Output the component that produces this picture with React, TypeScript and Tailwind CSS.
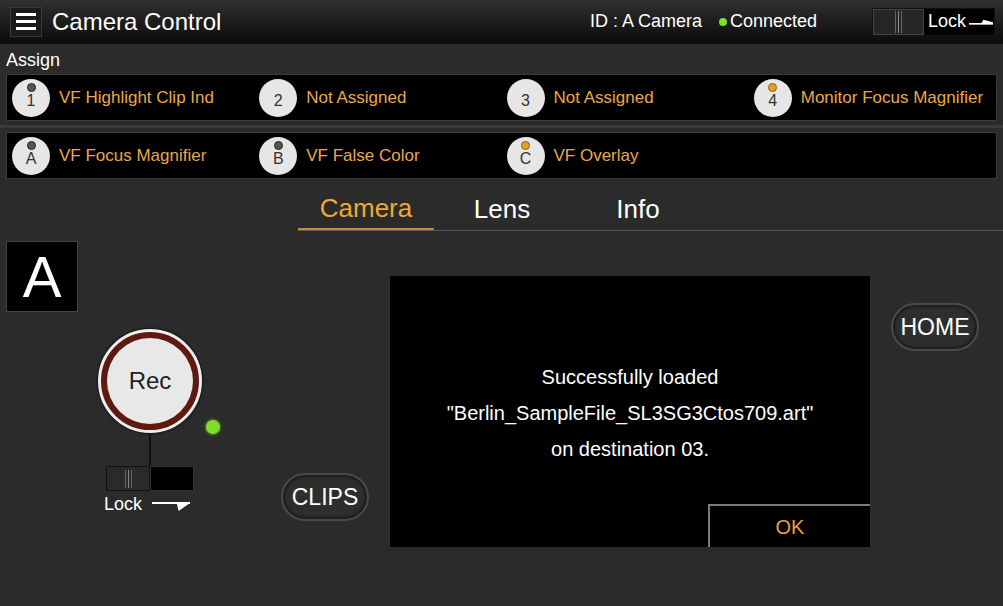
import React from 'react';

const FONT = { fontFamily: '"Liberation Sans", Arial, sans-serif' };

type Assign = { key: string; label: string; dot: 'gray' | 'orange' | 'none' };

const ROW1: Assign[] = [
  { key: '1', label: 'VF Highlight Clip Ind', dot: 'gray' },
  { key: '2', label: 'Not Assigned', dot: 'none' },
  { key: '3', label: 'Not Assigned', dot: 'none' },
  { key: '4', label: 'Monitor Focus Magnifier', dot: 'orange' },
];

const ROW2: Assign[] = [
  { key: 'A', label: 'VF Focus Magnifier', dot: 'gray' },
  { key: 'B', label: 'VF False Color', dot: 'gray' },
  { key: 'C', label: 'VF Overlay', dot: 'orange' },
];

// line with a small half arrow head, as drawn next to the "Lock" labels
function LockArrow({ className, down }: { className?: string; down?: boolean }) {
  return (
    <svg viewBox="0 0 40 12" preserveAspectRatio="none" className={className}>
      <path d={down ? 'M0 3 H40' : 'M0 7 H40'} stroke="#fff" strokeWidth="2" />
      <path d={down ? 'M26 3 L40 3 L28 11 Z' : 'M20 7 L40 7 L40 5 L24 2 Z'} fill="#fff" />
    </svg>
  );
}

function AssignButton({ item }: { item: Assign }) {
  return (
    <div className="flex items-center gap-[9px] pl-[5px]">
      <div className="flex h-[38px] w-[38px] shrink-0 flex-col items-center rounded-full bg-[#e6e6e6] shadow-[0_0_2px_#000]">
        <span
          className={
            item.dot === 'gray'
              ? 'mt-[4px] h-[9px] w-[9px] rounded-full border border-[#222] bg-[#555]'
              : item.dot === 'orange'
                ? 'mt-[4px] h-[9px] w-[9px] rounded-full border border-[#8a5a10] bg-[#e8a020]'
                : 'mt-[4px] h-[9px] w-[9px]'
          }
        />
        <span className="mt-[-1px] text-[16px] leading-[20px] text-[#333]">{item.key}</span>
      </div>
      <span className="text-[17px] text-[#e8a848]">{item.label}</span>
    </div>
  );
}

function AssignRow({ items }: { items: Assign[] }) {
  return (
    <div className="mx-[6px] grid h-[47px] grid-cols-4 items-center border border-[#3c3c3c] bg-black">
      {items.map((it) => (
        <AssignButton key={it.key} item={it} />
      ))}
    </div>
  );
}

function PillButton({ label }: { label: string }) {
  return (
    <div className="flex h-[48px] w-[88px] items-center justify-center rounded-full border-2 border-[#4a4a4a] bg-[#2e2e2e] text-[23px] text-white shadow-[inset_0_0_4px_#000]">
      {label}
    </div>
  );
}

export default function App() {
  return (
    <div style={FONT} className="h-[606px] w-[1003px] overflow-hidden bg-[#2b2b2b] text-white">
      {/* header */}
      <div className="flex h-[44px] items-center border-b border-[#111] bg-gradient-to-b from-[#303030] to-[#0c0c0c] pl-[10px] pr-[8px]">
        <div className="flex h-[30px] w-[32px] flex-col items-center justify-center gap-[4px] border border-[#3a3a3a] bg-[#1a1a1a]">
          <span className="h-[3px] w-[20px] bg-white" />
          <span className="h-[3px] w-[20px] bg-white" />
          <span className="h-[3px] w-[20px] bg-white" />
        </div>
        <span className="ml-[10px] text-[24px]">Camera Control</span>
        <span className="ml-auto text-[18px]">ID : A Camera</span>
        <span className="ml-[17px] h-[8px] w-[8px] rounded-full bg-[#7ee02a]" />
        <span className="ml-[3px] text-[18px]">Connected</span>
        <div className="ml-[55px] flex h-[28px] w-[123px] border border-[#111]">
          <div className="flex w-[51px] items-center justify-center gap-[2px] border border-[#444] bg-[#262626]">
            <span className="h-[22px] w-px bg-[#666]" />
            <span className="h-[22px] w-px bg-[#888]" />
            <span className="h-[22px] w-px bg-[#666]" />
          </div>
          <div className="flex flex-1 items-center gap-[3px] bg-black pl-[4px]">
            <span className="text-[18px]">Lock</span>
            <LockArrow className="mt-[2px] h-[10px] w-[24px]" />
          </div>
        </div>
      </div>

      {/* assign */}
      <div className="pl-[6px] pt-[6px] text-[18px] leading-[21px]">Assign</div>
      <div className="mt-[3px]">
        <AssignRow items={ROW1} />
      </div>
      <div className="mt-[4px] h-[3px] bg-[#3a3a3a]" />
      <div className="mt-[4px]">
        <AssignRow items={ROW2} />
      </div>

      {/* tabs */}
      <div className="ml-[298px] mt-[9px] flex h-[43px] border-b border-[#555]">
        <div className="flex w-[136px] items-center justify-center border-b-2 border-[#c98a3a] text-[26px] text-[#f0a832]">
          Camera
        </div>
        <div className="flex w-[136px] items-center justify-center text-[26px]">Lens</div>
        <div className="flex w-[136px] items-center justify-center text-[26px]">Info</div>
      </div>

      {/* main */}
      <div className="mt-[10px] flex items-start">
        <div className="w-[281px] shrink-0 pl-[6px]">
          <div className="flex h-[71px] w-[72px] items-center justify-center border border-[#444] bg-black text-[58px] leading-none">
            A
          </div>
          <div className="ml-[92px] mt-[17px] flex w-[130px] flex-col items-start">
            <div className="flex items-end">
              <div className="flex h-[104px] w-[104px] items-center justify-center rounded-full border-[3px] border-[#eee] bg-[#5e1a10] p-[6px] shadow-[0_0_3px_#000]">
                <div className="flex h-full w-full items-center justify-center rounded-full bg-[#e8e8e8] text-[24px] text-[#222]">
                  Rec
                </div>
              </div>
              <span className="mb-[-1px] ml-[4px] h-[14px] w-[14px] rounded-full bg-[#7edc2a] shadow-[0_0_3px_#7edc2a]" />
            </div>
            <div className="ml-[51px] h-[33px] w-[2px] bg-[#111]" />
            <div className="ml-[8px] flex h-[25px] w-[88px]">
              <div className="flex w-[44px] items-center justify-center gap-[2px] border border-[#111] bg-[#2a2a2a]">
                <span className="h-[18px] w-px bg-[#666]" />
                <span className="h-[18px] w-px bg-[#888]" />
                <span className="h-[18px] w-px bg-[#666]" />
              </div>
              <div className="w-[44px] border border-[#333] bg-black" />
            </div>
            <div className="ml-[6px] mt-[3px] flex items-start">
              <span className="text-[18px] leading-[20px]">Lock</span>
              <LockArrow down className="ml-[10px] mt-[6px] h-[12px] w-[38px]" />
            </div>
          </div>
        </div>

        <div className="mt-[232px] shrink-0">
          <PillButton label="CLIPS" />
        </div>

        <div className="ml-[21px] mt-[35px] flex h-[271px] w-[480px] shrink-0 flex-col bg-black">
          <div className="pt-[83px] text-center text-[20px] leading-[36px]">
            <div>Successfully loaded</div>
            <div>"Berlin_SampleFile_SL3SG3Ctos709.art"</div>
            <div>on destination 03.</div>
          </div>
          <div className="mt-auto flex justify-end">
            <div className="flex h-[43px] w-[162px] items-center justify-center border-l-2 border-t-2 border-[#7a7a7a] text-[20px] text-[#e8a040]">
              OK
            </div>
          </div>
        </div>

        <div className="ml-[21px] mt-[62px] shrink-0">
          <PillButton label="HOME" />
        </div>
      </div>
    </div>
  );
}
